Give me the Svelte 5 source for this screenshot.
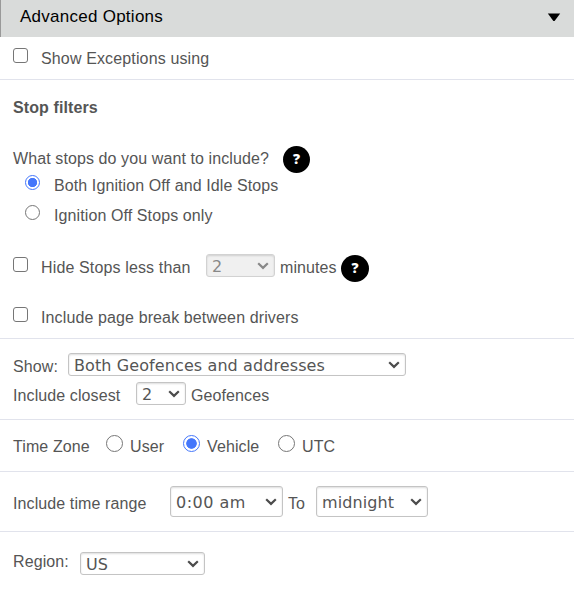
<script>
  let exceptions = $state(false);
  let hideShort = $state(false);
  let pageBreak = $state(false);
  let stops = $state('both');
  let zone = $state('vehicle');
</script>

{#snippet select(name, value, width, height, disabled)}
  <span class="select {name}" class:disabled style="width:{width}px;height:{height}px">
    <select aria-label={name} {disabled}>
      <option>{value}</option>
    </select>
    <svg width="12" height="8" viewBox="0 0 12 8" aria-hidden="true">
      <path d="M1.2 1.3 6 5.9 10.8 1.3" fill="none" stroke="currentColor" stroke-width="2.2" />
    </svg>
  </span>
{/snippet}

<main>
  <header>
    <span class="title">Advanced Options</span>
    <svg width="14" height="9" viewBox="0 0 14 9" aria-hidden="true"><path d="M.8.5h12.4L7.6 8H6.4Z" fill="#000" /></svg>
  </header>

  <section class="exceptions">
    <label class="row">
      <input type="checkbox" bind:checked={exceptions} />
      <span class="t-exc">Show Exceptions using</span>
    </label>
  </section>

  <section class="filters">
    <h2>Stop filters</h2>
    <div class="row question">
      <span class="t-what">What stops do you want to include?</span>
      <b class="help">?</b>
    </div>
    <label class="row option first">
      <input type="radio" value="both" bind:group={stops} />
      <span class="t-both">Both Ignition Off and Idle Stops</span>
    </label>
    <label class="row option second">
      <input type="radio" value="off" bind:group={stops} />
      <span class="t-off">Ignition Off Stops only</span>
    </label>
    <div class="row hide">
      <input type="checkbox" aria-label="Hide stops" bind:checked={hideShort} />
      <span class="t-hide">Hide Stops less than</span>
      {@render select('duration', '2', 69, 23, true)}
      <span class="t-min">minutes</span>
      <b class="help">?</b>
    </div>
    <label class="row break">
      <input type="checkbox" bind:checked={pageBreak} />
      <span class="t-break">Include page break between drivers</span>
    </label>
  </section>

  <section class="places">
    <div class="row show">
      <span class="t-show">Show:</span>
      {@render select('display', 'Both Geofences and addresses', 338, 23, false)}
    </div>
    <div class="row closest">
      <span class="t-close">Include closest</span>
      {@render select('count', '2', 50, 23, false)}
      <span class="t-geo">Geofences</span>
    </div>
  </section>

  <section class="zones">
    <div class="row">
      <span class="t-zone">Time Zone</span>
      <input type="radio" aria-label="User" value="user" bind:group={zone} />
      <span class="t-user">User</span>
      <input type="radio" aria-label="Vehicle" value="vehicle" bind:group={zone} />
      <span class="t-vehicle">Vehicle</span>
      <input type="radio" aria-label="UTC" value="utc" bind:group={zone} />
      <span class="t-utc">UTC</span>
    </div>
  </section>

  <section class="range">
    <div class="row">
      <span class="t-range">Include time range</span>
      {@render select('from', '0:00 am', 113, 31, false)}
      <span class="t-to">To</span>
      {@render select('until', 'midnight', 112, 31, false)}
    </div>
  </section>

  <section class="region">
    <div class="row">
      <span class="t-region">Region:</span>
      {@render select('country', 'US', 125, 23, false)}
    </div>
  </section>
</main>

<style>
  :global(body) { background: #fff; }
  main {
    box-sizing: border-box;
    height: 595px;
    overflow: hidden;
    font: 16px/20px "Liberation Sans", Arial, sans-serif;
    letter-spacing: 0.1px;
    color: #555;
    white-space: nowrap;
  }
  header {
    box-sizing: border-box;
    height: 37px;
    padding: 7px 13px 0 19px;
    display: flex;
    justify-content: space-between;
    background: #d9dbda;
    border-left: 1px solid #999;
    color: #000;
    font-size: 17px;
    letter-spacing: 0.26px;
  }
  header svg { margin-top: 6px; }
  section { box-sizing: border-box; padding-left: 13px; border-bottom: 1px solid #e1e3ec; }
  .exceptions { height: 43px; padding-top: 11px; }
  .filters { height: 259px; padding-top: 18px; }
  .places { height: 81px; padding-top: 14px; }
  .zones { height: 52px; padding-top: 15px; }
  .range { height: 60px; padding-top: 14px; }
  .region { height: 63px; padding-top: 20px; border: 0; }

  .row { display: flex; align-items: flex-start; }
  .row > span { flex: none; }
  h2 { margin: 0; font-size: 16px; line-height: 20px; font-weight: 700; height: 48px; }

  input {
    appearance: none;
    box-sizing: border-box;
    flex: none;
    width: 15px;
    height: 15px;
    margin: 0;
    border: 1.25px solid #767676;
    border-radius: 3px;
    background: #fff;
  }
  input[type="radio"] { border-radius: 50%; }
  input:checked {
    border: 1.5px solid #4577fb;
    background: radial-gradient(circle, #4577fb 4.3px, #fff 5px);
  }
  .zones input:checked { background: radial-gradient(circle, #4577fb 4.9px, #fff 5.6px); }

  .help {
    width: 27px;
    height: 27px;
    flex: none;
    border-radius: 50%;
    background: #000;
    color: #fff;
    text-align: center;
    font: 800 14px/25px "Open Sans", sans-serif;
  }

  .select { position: relative; display: block; }
  select {
    appearance: none;
    box-sizing: border-box;
    display: block;
    width: 100%;
    height: 100%;
    margin: 0;
    padding: 1px 0 0 5px;
    border: 1px solid #c4c4c4;
    border-radius: 3px;
    background: #fff;
    box-shadow: inset 0 1px 2px #0002;
    color: #555;
    font: 16px "DejaVu Sans", Verdana, sans-serif;
    letter-spacing: 0.1px;
  }
  .from select { letter-spacing: 0.5px; }
  .select svg { position: absolute; right: 6px; top: calc(50% - 4px); color: #4c4c4c; }
  .disabled select { background: #f0f0f0; border-color: #d2d2d2; color: #888; opacity: 1; }
  .disabled svg { color: #888; }

  .t-exc { margin: 1px 0 0 13px; letter-spacing: 0.14px; }
  .question { height: 27px; }
  .t-what { margin-top: 3px; width: 270px; }
  .option { height: 30px; padding-left: 12px; }
  .option input { margin-top: 2px; }
  .option span { margin: 3px 0 0 14px; }
  .hide { height: 50px; margin-top: 21px; }
  .hide input { margin-top: 3px; }
  .t-hide { margin: 4px 0 0 13px; width: 165px; letter-spacing: 0.14px; }
  .t-min { margin: 4px 0 0 5px; width: 61px; }
  .hide .help { margin-top: 1px; width: 28px; }
  .break input { margin-top: 3px; }
  .t-break { margin: 4px 0 0 13px; letter-spacing: 0.12px; }
  .show { height: 29px; }
  .t-show { width: 55px; margin-top: 4px; }
  .t-close { width: 123px; margin-top: 4px; }
  .t-geo { margin: 4px 0 0 5px; }
  .zones input { width: 17px; height: 17px; }
  .zones span { margin-top: 2px; }
  .t-zone { width: 93px; }
  .t-user { width: 53px; margin-left: 7px; }
  .t-vehicle { width: 71px; margin-left: 7px; }
  .t-utc { margin-left: 7px; }
  .t-range { width: 157px; margin-top: 8px; }
  .t-to { width: 28px; margin: 8px 0 0 5px; }
  .t-region { width: 67px; }
</style>
